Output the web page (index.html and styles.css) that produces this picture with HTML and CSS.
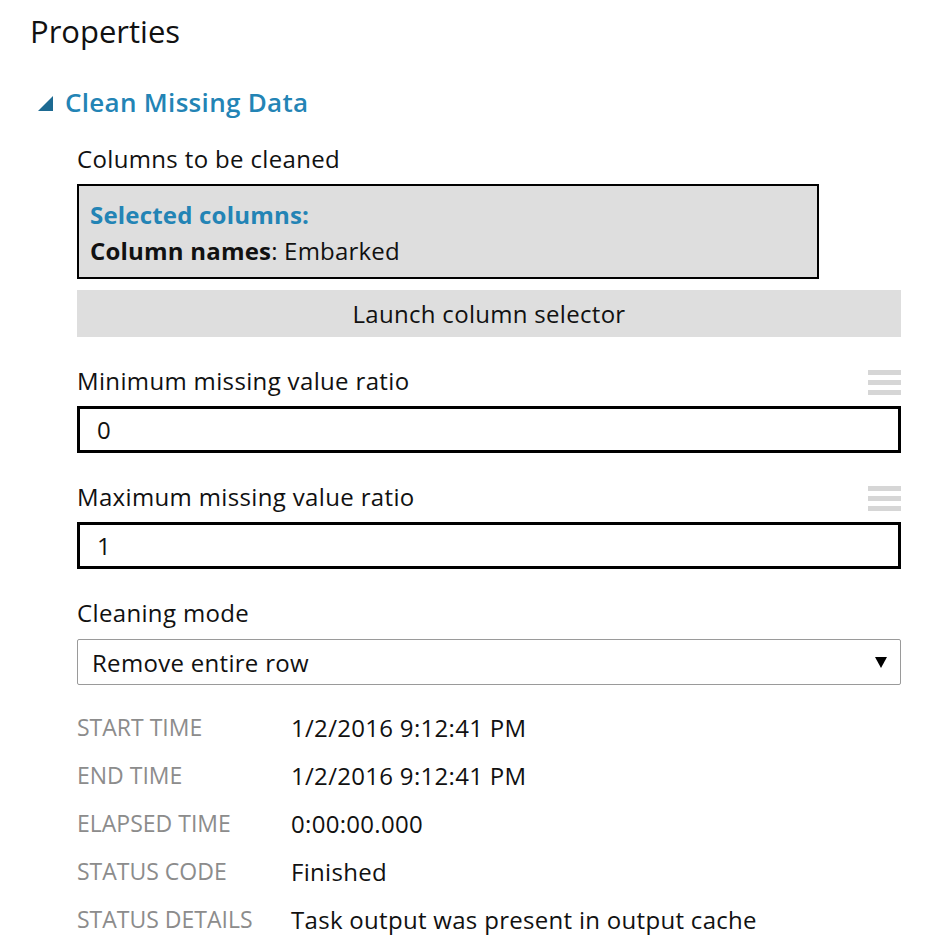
FILE: index.html
```html
<!DOCTYPE html>
<html>
<head>
<meta charset="utf-8">
<link rel="stylesheet" href="styles.css">
</head>
<body>
<div class="panel">
  <h1 class="title">Properties</h1>
  <div class="section-head">
    <span class="tri"></span>
    <span class="section-name">Clean Missing Data</span>
  </div>
  <div class="section-body">
    <div class="label">Columns to be cleaned</div>
    <div class="colbox">
      <div class="sel">Selected columns:</div>
      <div class="names"><b>Column names</b>: Embarked</div>
    </div>
    <div class="launch">Launch column selector</div>

    <div class="label-row">
      <span class="label">Minimum missing value ratio</span>
      <span class="burger"><i></i><i></i><i></i></span>
    </div>
    <div class="input">0</div>

    <div class="label-row">
      <span class="label">Maximum missing value ratio</span>
      <span class="burger"><i></i><i></i><i></i></span>
    </div>
    <div class="input">1</div>

    <div class="label mode">Cleaning mode</div>
    <div class="select">
      <span>Remove entire row</span>
      <svg class="arrow" width="12" height="11" viewBox="0 0 12 11"><polygon points="0,0 12,0 6,11" fill="#000"/></svg>
    </div>

    <div class="info">
      <div class="k">START TIME</div><div class="v">1/2/2016 9:12:41 PM</div>
      <div class="k">END TIME</div><div class="v">1/2/2016 9:12:41 PM</div>
      <div class="k">ELAPSED TIME</div><div class="v">0:00:00.000</div>
      <div class="k">STATUS CODE</div><div class="v">Finished</div>
      <div class="k">STATUS DETAILS</div><div class="v">Task output was present in output cache</div>
    </div>
  </div>
</div>
</body>
</html>
```

FILE: styles.css
```css
* { box-sizing: border-box; }
html, body { margin: 0; padding: 0; background: #fff; }
body {
  font-family: "Open Sans", "Noto Sans", "Liberation Sans", sans-serif;
  color: #111;
}
.panel { padding: 12px 46px 0 30px; width: 947px; }
.title {
  margin: 0;
  font-size: 31px;
  font-weight: 400;
  line-height: 38px;
  color: #111;
}
.section-head {
  display: flex;
  align-items: center;
  margin-top: 36px;
  padding-left: 8px;
  height: 32px;
}
.tri {
  width: 0; height: 0;
  border-left: 15px solid transparent;
  border-bottom: 15px solid #1d6a92;
  margin-right: 12px;
  margin-top: 2px;
}
.section-name {
  font-size: 26px;
  font-weight: 600;
  color: #2384b5;
  letter-spacing: 0.3px;
}
.section-body { padding-left: 47px; padding-top: 25px; }
.label { font-size: 24px; line-height: 32px; color: #111; letter-spacing: 0.35px; }
.colbox {
  margin-top: 9px;
  width: 742px;
  height: 95px;
  border: 2px solid #000;
  background: #dedede;
  padding: 11px 0 0 11px;
  font-size: 24px;
  line-height: 36px;
  letter-spacing: 0.2px;
}
.sel { color: #2384b5; font-weight: 700; }
.names b { font-weight: 700; }
.launch {
  margin-top: 11px;
  height: 47px;
  background: #dedede;
  display: flex;
  align-items: center;
  justify-content: center;
  font-size: 24px;
  letter-spacing: 0.3px;
}
.label-row {
  display: flex;
  justify-content: space-between;
  align-items: center;
  margin-top: 26px;
  height: 36px;
}
.burger { display: flex; flex-direction: column; gap: 5px; width: 33px; margin-top: 2px; }
.burger i { display: block; height: 5px; background: #d6d6d6; }
.input {
  margin-top: 7px;
  height: 47px;
  border: 3px solid #000;
  padding-left: 17px;
  display: flex;
  align-items: center;
  font-size: 24px;
}
.mode { margin-top: 28px; }
.select {
  margin-top: 10px;
  height: 46px;
  border: 1px solid #9a9a9a;
  border-radius: 2px;
  display: flex;
  align-items: center;
  justify-content: space-between;
  padding: 0 13px 0 14px;
  font-size: 24px;
  letter-spacing: 0.3px;
}
.arrow { display: block; }
.info {
  margin-top: 18px;
  display: grid;
  grid-template-columns: 214px 1fr;
  grid-auto-rows: 48px;
  align-items: center;
}
.k { color: #8c8c8c; font-size: 23px; }
.v { color: #111; font-size: 24px; letter-spacing: 0.3px; }
```
